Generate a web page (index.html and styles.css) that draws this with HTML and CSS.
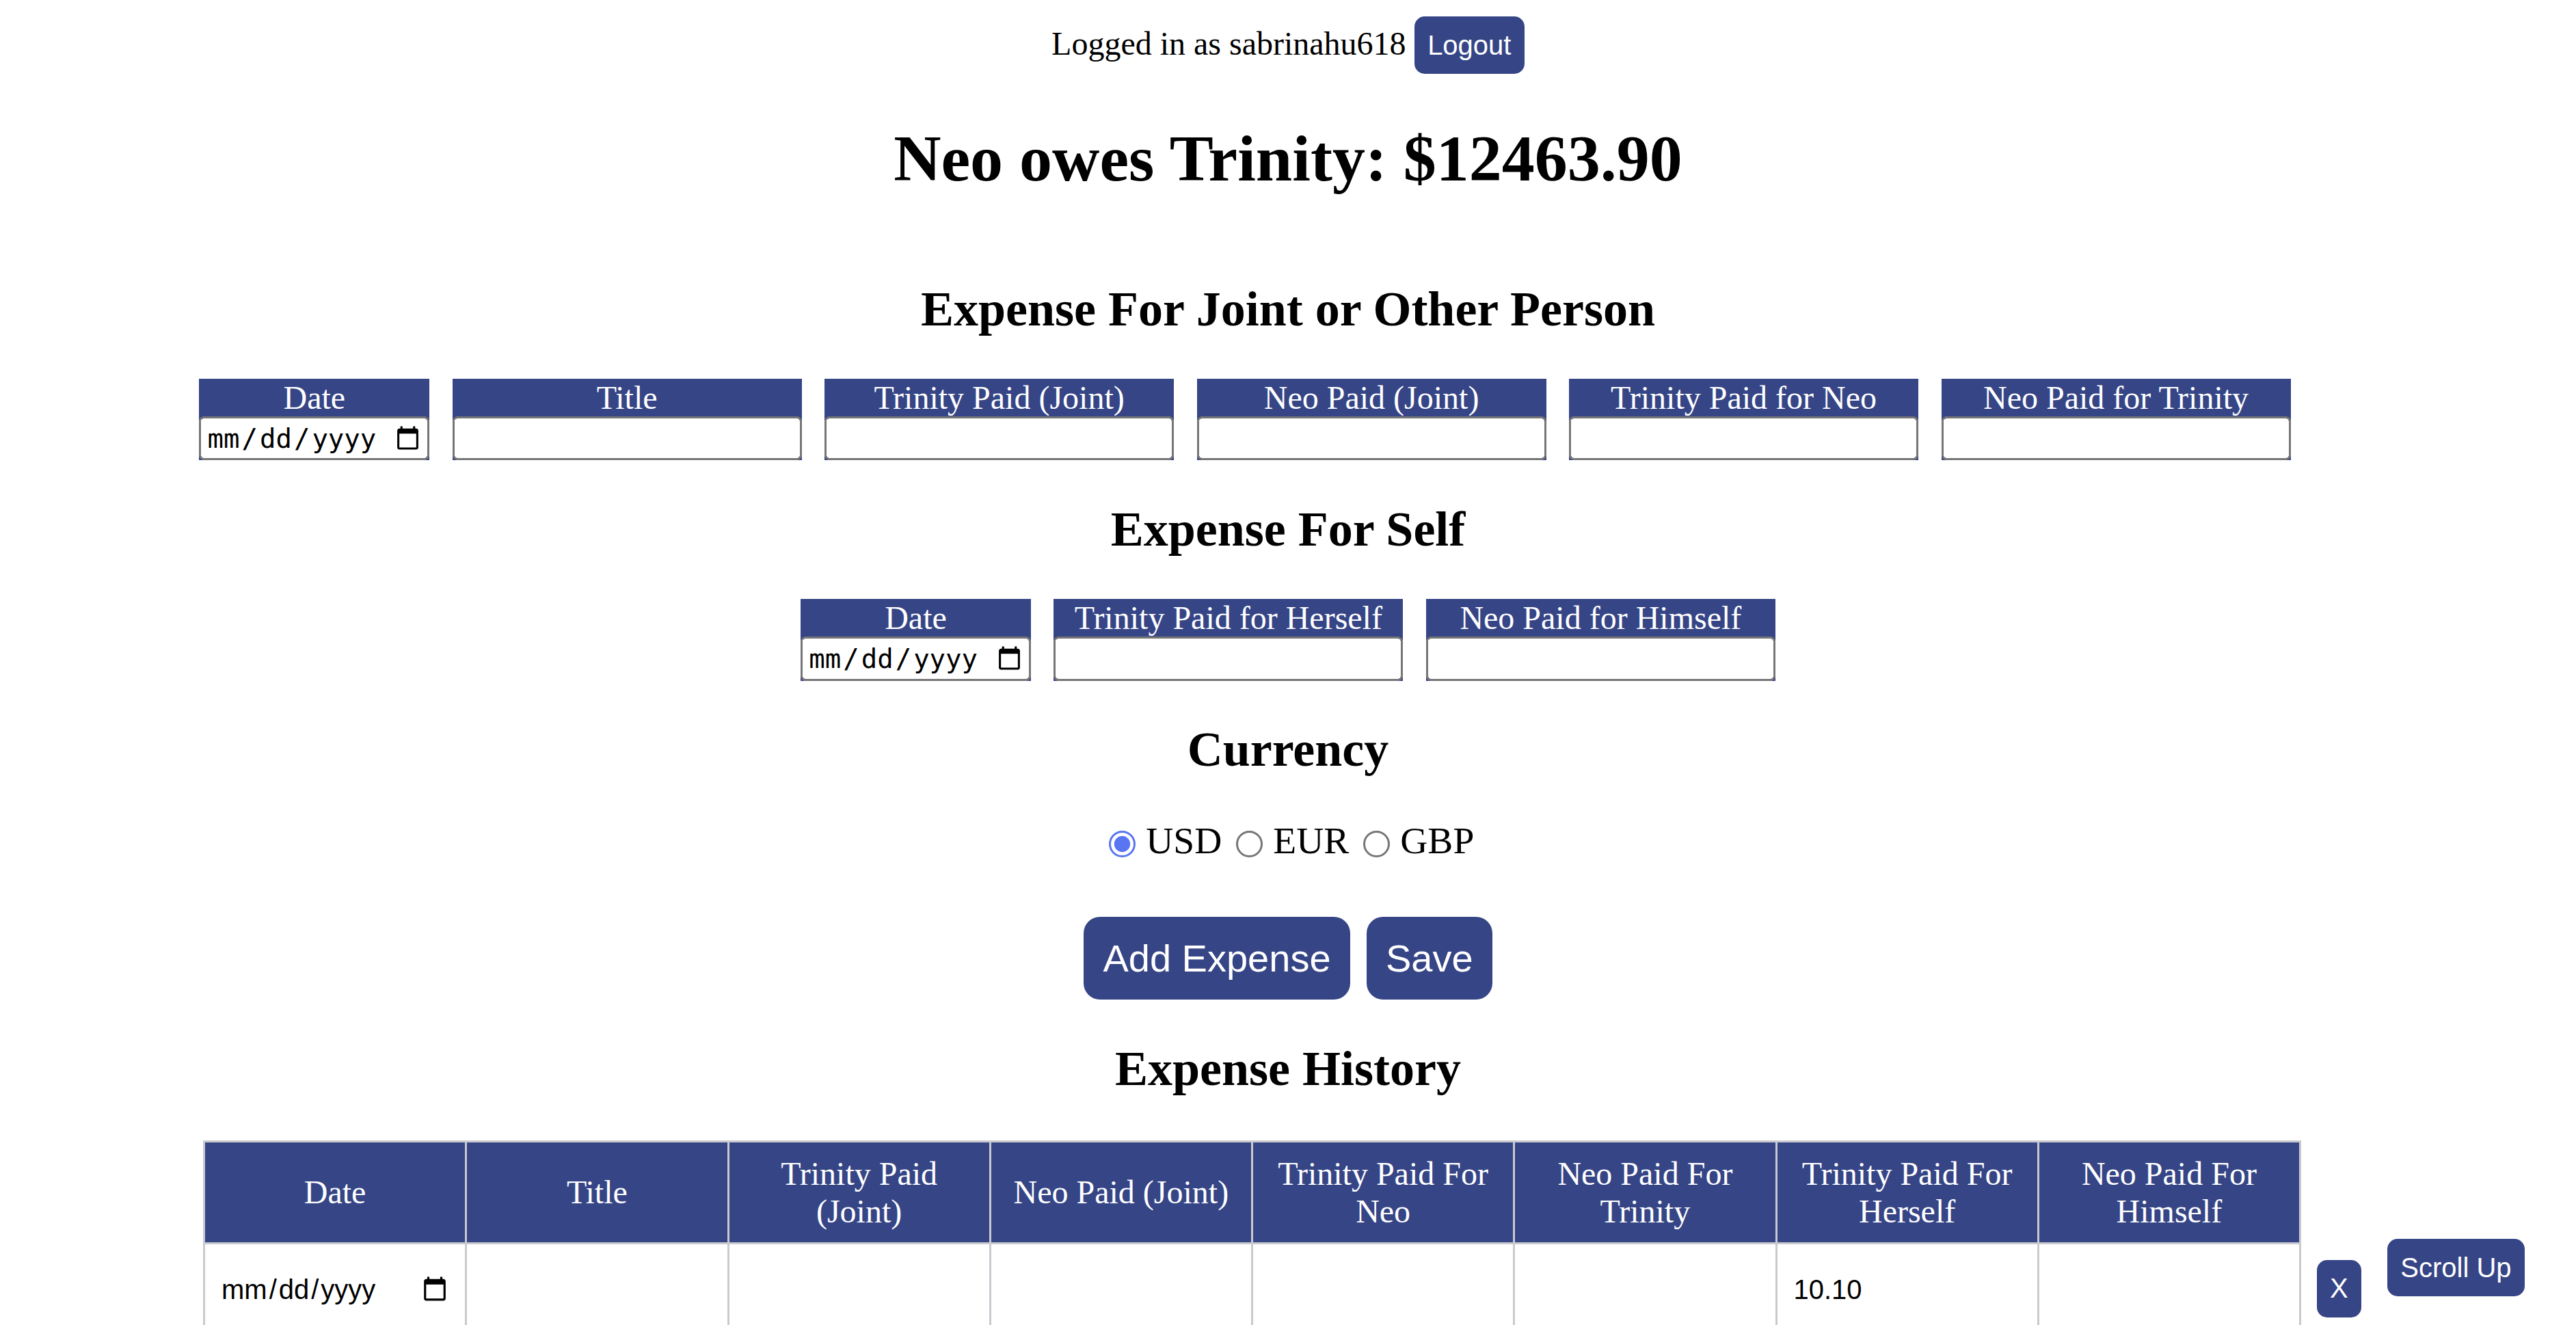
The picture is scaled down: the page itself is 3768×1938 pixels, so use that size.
FILE: index.html
```html
<!DOCTYPE html>
<html lang="en">
<head>
<meta charset="utf-8">
<title>Expense Tracker</title>
<link rel="stylesheet" href="styles.css">
</head>
<body>
<div class="app">
  <div class="session">Logged in as sabrinahu618 <button class="btn btn-small" type="button">Logout</button></div>

  <h1 class="balance">Neo owes Trinity: $12463.90</h1>

  <h2 class="section-title">Expense For Joint or Other Person</h2>
  <div class="field-row field-row-joint">
    <label class="field field-date"><span class="field-label">Date</span><input class="field-input date-input" type="date"></label>
    <label class="field"><span class="field-label">Title</span><input class="field-input" type="text"></label>
    <label class="field"><span class="field-label">Trinity Paid (Joint)</span><input class="field-input" type="text"></label>
    <label class="field"><span class="field-label">Neo Paid (Joint)</span><input class="field-input" type="text"></label>
    <label class="field"><span class="field-label">Trinity Paid for Neo</span><input class="field-input" type="text"></label>
    <label class="field"><span class="field-label">Neo Paid for Trinity</span><input class="field-input" type="text"></label>
  </div>

  <h2 class="section-title">Expense For Self</h2>
  <div class="field-row">
    <label class="field field-date"><span class="field-label">Date</span><input class="field-input date-input" type="date"></label>
    <label class="field"><span class="field-label">Trinity Paid for Herself</span><input class="field-input" type="text"></label>
    <label class="field"><span class="field-label">Neo Paid for Himself</span><input class="field-input" type="text"></label>
  </div>

  <h2 class="section-title">Currency</h2>
  <div class="currency">
    <label class="currency-option"><input class="currency-radio" type="radio" name="currency" checked><span>USD</span></label>
    <label class="currency-option"><input class="currency-radio" type="radio" name="currency"><span>EUR</span></label>
    <label class="currency-option"><input class="currency-radio" type="radio" name="currency"><span>GBP</span></label>
  </div>

  <div class="actions">
    <button class="btn btn-large" type="button">Add Expense</button>
    <button class="btn btn-large" type="button">Save</button>
  </div>

  <h2 class="section-title">Expense History</h2>
  <table class="history">
    <colgroup>
      <col class="col-data"><col class="col-data"><col class="col-data"><col class="col-data">
      <col class="col-data"><col class="col-data"><col class="col-data"><col class="col-data">
      <col class="col-action">
    </colgroup>
    <thead>
      <tr>
        <th>Date</th>
        <th>Title</th>
        <th>Trinity Paid (Joint)</th>
        <th>Neo Paid (Joint)</th>
        <th>Trinity Paid For Neo</th>
        <th>Neo Paid For Trinity</th>
        <th>Trinity Paid For Herself</th>
        <th>Neo Paid For Himself</th>
      </tr>
    </thead>
    <tbody>
      <tr>
        <td><input class="cell-input date-input" type="date"></td>
        <td><input class="cell-input" type="text"></td>
        <td><input class="cell-input" type="text"></td>
        <td><input class="cell-input" type="text"></td>
        <td><input class="cell-input" type="text"></td>
        <td><input class="cell-input" type="text"></td>
        <td><input class="cell-input" type="text" value="10.10"></td>
        <td><input class="cell-input" type="text"></td>
        <td class="cell-action"><button class="btn btn-small" type="button">X</button></td>
      </tr>
    </tbody>
  </table>
</div>
<button class="btn btn-small scroll-up" type="button">Scroll Up</button>
</body>
</html>
```
FILE: styles.css
```css
html {
  zoom: 3;
  overflow: hidden;
}

body {
  margin: 8px;
  font-family: "Liberation Serif", "Times New Roman", serif;
  font-size: 16px;
  color: #000;
  background: #fff;
}

.app {
  display: flex;
  flex-direction: column;
  align-items: center;
}

.btn {
  background: #364586;
  color: #fff;
  border: none;
  font-family: "Liberation Sans", Arial, sans-serif;
  line-height: normal;
  cursor: pointer;
}

.btn-small {
  font-size: 13.333px;
  padding: 6.5px;
  border-radius: 5px;
}

.btn-large {
  font-size: 18.67px;
  padding: 9.4px;
  border-radius: 8px;
}

.session {
  text-align: center;
}

.balance {
  font-size: 32px;
  font-weight: bold;
  margin: 22.6px 0 21.44px;
}

.section-title {
  font-size: 24px;
  font-weight: bold;
  margin: 19.92px 0;
}

.field-row {
  display: flex;
  gap: 11.2px;
}

.field-row-joint {
  margin-right: 42px;
}

.field {
  display: flex;
  flex-direction: column;
  width: 170.3px;
  background: #364586;
}

.field-date {
  width: 112.2px;
}

.field-label {
  color: #fff;
  text-align: center;
  line-height: normal;
}

.field-input {
  width: 100%;
  height: 21.6px;
  box-sizing: border-box;
  margin: 0;
  font-family: "Liberation Sans", Arial, sans-serif;
  font-size: 13.333px;
}

.date-input {
  font-family: "DejaVu Sans Mono", monospace;
  font-size: 13px;
}

.currency {
  display: flex;
  gap: 7px;
  padding-left: 3.5px;
  font-size: 18.5px;
}

.currency-option {
  display: flex;
  align-items: center;
  gap: 5px;
}

.currency-radio {
  width: 13px;
  height: 13px;
  margin: 3px 0 0 0;
  accent-color: #5876f2;
}

.actions {
  display: flex;
  gap: 8px;
  margin-top: 26.6px;
}

.history {
  border-collapse: collapse;
  table-layout: fixed;
  width: 1057px;
  margin-top: 1px;
}

.col-data {
  width: 127.75px;
}

.col-action {
  width: 35px;
}

.history th {
  background: #364586;
  color: #fff;
  font-weight: normal;
  padding: 6px 8px;
  border: 1px solid #c9cacf;
  line-height: normal;
}

.history td {
  border: 1px solid #c9cacf;
  padding: 12px 6px;
}

.history td.cell-action {
  border: none;
  padding: 8.2px 0 0 7.5px;
  vertical-align: top;
}

.cell-input {
  width: 100%;
  box-sizing: border-box;
  margin: 0;
  border: none;
  background: transparent;
  outline: none;
  font-family: "Liberation Sans", Arial, sans-serif;
  font-size: 13.333px;
}

.scroll-up {
  position: fixed;
  right: 25px;
  bottom: 14px;
}
```
